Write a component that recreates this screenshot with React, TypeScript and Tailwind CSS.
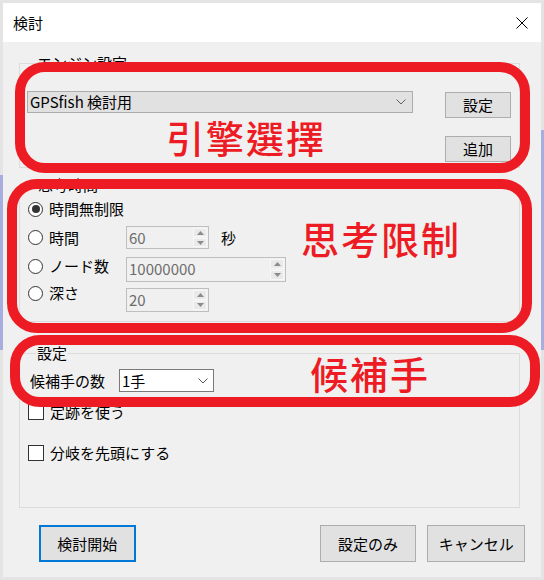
import React from 'react'

const Chevron = ({ color = '#606060' }: { color?: string }) => (
    <svg width="10" height="6" viewBox="0 0 10 6" fill="none">
        <path d="M0.5 0.5 L5 5 L9.5 0.5" stroke={color} strokeWidth="1" />
    </svg>
)

const Radio = ({ checked = false, label }: { checked?: boolean; label: string }) => (
    <div className="flex items-center">
        <div className="w-[15px] h-[15px] rounded-full border border-[#333333] bg-white flex items-center justify-center">
            {checked && <div className="w-[8px] h-[8px] rounded-full bg-[#333333]" />}
        </div>
        <span className="ml-[6px] leading-[16px]">{label}</span>
    </div>
)

const Check = ({ label }: { label: string }) => (
    <div className="flex items-center">
        <div className="w-[16px] h-[16px] border border-[#333333] bg-white" />
        <span className="ml-[6px] leading-[16px]">{label}</span>
    </div>
)

const Arrow = ({ up }: { up?: boolean }) => (
    <svg width="7" height="4" viewBox="0 0 7 4">
        <path d={up ? 'M0 4 L3.5 0 L7 4 Z' : 'M0 0 L3.5 4 L7 0 Z'} fill="#8c8c8c" />
    </svg>
)

const Spin = ({ value, w, h }: { value: string; w: string; h: string }) => (
    <div className={`${w} ${h} flex border border-[#bfbfbf] bg-[#f0f0f0]`}>
        <span className="flex-1 pl-[2px] pt-[2px] text-[#6d6d6d] leading-[18px]">{value}</span>
        <div className="w-[16px] flex flex-col p-[1px] gap-[1px]">
            <div className="flex-1 flex items-center justify-center bg-[#e9e9e9] border border-[#f7f7f7]">
                <Arrow up />
            </div>
            <div className="flex-1 flex items-center justify-center bg-[#e9e9e9] border border-[#f7f7f7]">
                <Arrow />
            </div>
        </div>
    </div>
)

const Btn = ({ children, className = '' }: { children: React.ReactNode; className?: string }) => (
    <div className={`flex items-center justify-center bg-[#e1e1e1] border border-[#adadad] ${className}`}>
        {children}
    </div>
)

const Mark = ({ className }: { className: string }) => (
    <div className={`absolute border-[10px] border-[#ed1c24] rounded-[30px] ${className}`} />
)

const MarkText = ({ children, className }: { children: React.ReactNode; className: string }) => (
    <div className={`absolute font-['Noto_Sans_CJK_TC',sans-serif] font-medium text-[38px] leading-none tracking-[2px] text-[#ed1c24] ${className}`}>
        {children}
    </div>
)

export default function App() {
    return (
        <div className="relative w-[544px] h-[580px] overflow-hidden bg-[#e4e4e4] font-['Noto_Sans_CJK_JP',sans-serif] text-[15px] leading-[18px] text-black">
            {/* background window bleeding through at the edges */}
            <div className="absolute left-0 top-[175px] w-[3px] h-[175px] bg-[#a7addf]" />
            <div className="absolute right-0 top-[130px] w-[3px] h-[220px] bg-[#a7addf]" />

            <div className="mx-[3px] mt-[3px] h-[574px] flex flex-col bg-[#f0f0f0]">
                {/* title bar */}
                <div className="h-[39px] bg-white flex items-center justify-between pl-[10px] pr-[13px]">
                    <span className="text-[15px]">検討</span>
                    <svg width="12" height="12" viewBox="0 0 12 12">
                        <path d="M0.5 0.5 L11.5 11.5 M11.5 0.5 L0.5 11.5" stroke="#000" strokeWidth="1" />
                    </svg>
                </div>

                <div className="px-[16px] flex flex-col">
                    {/* engine */}
                    <fieldset className="mt-[12px] w-[501px] border border-[#dcdcdc] pl-[7px] pr-[8px] pb-[5px]">
                        <legend className="ml-[9px] px-[1px] leading-[18px]">エンジン設定</legend>
                        <div className="flex">
                            <div className="mt-[19px] w-[386px] h-[22px] flex items-center justify-between bg-[#e1e1e1] border border-[#adadad] pl-[2px] pr-[6px]">
                                <span>GPSfish 検討用</span>
                                <Chevron />
                            </div>
                            <div className="ml-[32px] mt-[20px] flex flex-col">
                                <Btn className="w-[66px] h-[26px]">設定</Btn>
                                <Btn className="w-[66px] h-[26px] mt-[18px]">追加</Btn>
                            </div>
                        </div>
                    </fieldset>

                    {/* thinking */}
                    <fieldset className="mt-[8px] w-[501px] border border-[#dcdcdc] pl-[8px] pt-[7px] pb-[9px]">
                        <legend className="ml-[9px] px-[1px] leading-[18px]">思考時間</legend>
                        <div className="h-[16px] flex items-center">
                            <Radio checked label="時間無制限" />
                        </div>
                        <div className="mt-[9px] flex items-center">
                            <div className="w-[98px]">
                                <Radio label="時間" />
                            </div>
                            <Spin value="60" w="w-[83px]" h="h-[23px]" />
                            <span className="ml-[12px]">秒</span>
                        </div>
                        <div className="mt-[8px] flex items-start">
                            <div className="w-[98px] mt-[1px]">
                                <Radio label="ノード数" />
                            </div>
                            <Spin value="10000000" w="w-[160px]" h="h-[25px]" />
                        </div>
                        <div className="mt-[3px] flex items-start">
                            <div className="w-[98px]">
                                <Radio label="深さ" />
                            </div>
                            <div className="mt-[3px]">
                                <Spin value="20" w="w-[83px]" h="h-[24px]" />
                            </div>
                        </div>
                    </fieldset>

                    {/* settings */}
                    <fieldset className="mt-[22px] w-[501px] border border-[#dcdcdc] pl-[8px] pt-[7px] pb-[46px]">
                        <legend className="ml-[8px] px-[1px] leading-[18px]">設定</legend>
                        <div className="flex items-center pl-[2px]">
                            <span>候補手の数</span>
                            <div className="ml-[14px] w-[95px] h-[23px] flex items-center justify-between bg-white border border-[#7a7a7a] pl-[2px] pr-[5px]">
                                <span>1手</span>
                                <Chevron color="#555555" />
                            </div>
                        </div>
                        <div className="mt-[12px]">
                            <Check label="定跡を使う" />
                        </div>
                        <div className="mt-[25px]">
                            <Check label="分岐を先頭にする" />
                        </div>
                    </fieldset>

                    {/* buttons */}
                    <div className="mt-[17px] flex">
                        <div className="ml-[20px] w-[97px] h-[37px] flex items-center justify-center bg-[#e1e1e1] border-2 border-[#0078d7]">
                            検討開始
                        </div>
                        <Btn className="ml-[184px] w-[97px] h-[37px]">設定のみ</Btn>
                        <Btn className="ml-[11px] w-[98px] h-[37px]">キャンセル</Btn>
                    </div>
                </div>
            </div>

            {/* red annotations */}
            <Mark className="left-[15px] top-[62px] w-[515px] h-[111px]" />
            <Mark className="left-[7px] top-[179px] w-[525px] h-[154px]" />
            <Mark className="left-[10px] top-[335px] w-[530px] h-[72px]" />
            <MarkText className="left-[166px] top-[118px]">引擎選擇</MarkText>
            <MarkText className="left-[301px] top-[219px]">思考限制</MarkText>
            <MarkText className="left-[310px] top-[354px]">候補手</MarkText>
        </div>
    )
}
